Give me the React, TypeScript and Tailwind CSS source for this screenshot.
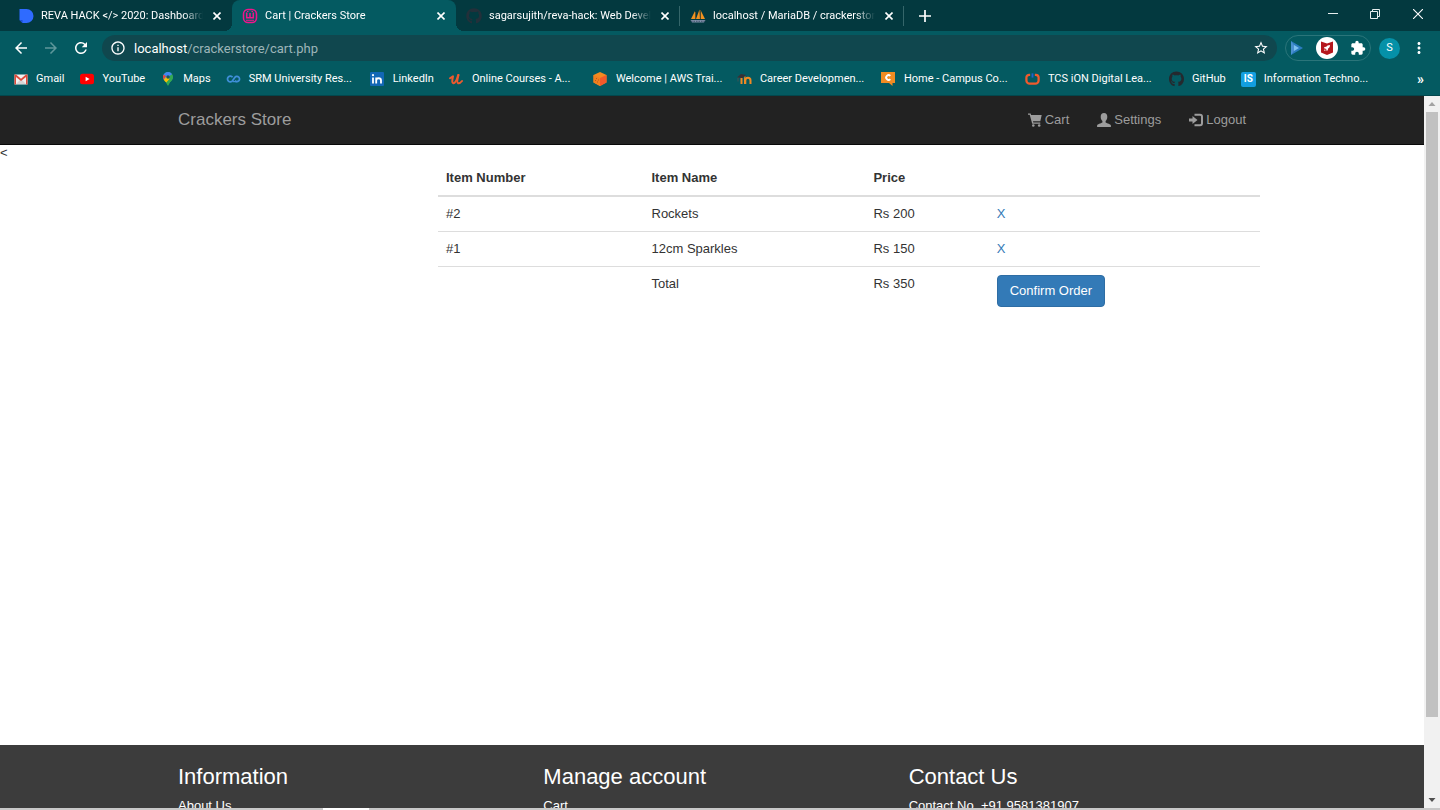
import type { ReactNode } from 'react';
import {
  MdArrowBack,
  MdArrowForward,
  MdRefresh,
  MdInfoOutline,
  MdStarBorder,
  MdExtension,
  MdMoreVert,
} from 'react-icons/md';
import { FaGithub } from 'react-icons/fa';

const DashIcon = () => (
  <svg viewBox="0 0 16 16" className="size-4">
    <path d="M1.500 1h7a7 7 0 0 1 0 14H4.500L1.500 12z" fill="#2f6bff" />
    <path d="M1.500 12h3v3z" fill="#1b4fd0" />
  </svg>
);

const WampIcon = () => (
  <svg viewBox="0 0 16 16" className="size-4" fill="none" stroke="#f0148c">
    <rect x="1.500" y="1.500" width="13" height="13" rx="4.500" strokeWidth="1.500" />
    <path d="M4.700 4.500v5.200h6.600V4.500M8 5v4.500" strokeWidth="1.500" />
    <path d="M4 12.300h8M5 3.500h1.500M9.500 3.500H11" strokeWidth="1" />
  </svg>
);

const PmaIcon = () => (
  <svg viewBox="0 0 16 16" className="size-4">
    <path d="M5 3 1 11h4zM9.500 1.500 6 11h4zM11 3v8h4z" fill="#f29220" />
    <path d="M5.500 4v7M10.400 2v9" stroke="#8a5a20" strokeWidth=".7" />
    <path d="M.5 12h15l-1.500 2.500H2z" fill="#7e8fa8" />
    <path d="M1 13.300h14" stroke="#33475e" strokeWidth=".8" strokeDasharray="1.500 1" />
  </svg>
);

const GmailIcon = () => (
  <svg viewBox="0 0 14 14" className="size-3.5">
    <path d="M.5 2.500h13v10H.5z" fill="#f1f1f1" />
    <path d="m2 12 5-5 5 5z" fill="#d8d4d4" />
    <path d="M.5 12.500v-10H2l5 4.200 5-4.200h1.500v10H12V5L7 9 2 5v7.500z" fill="#e04a3a" />
  </svg>
);

const YoutubeIcon = () => (
  <svg viewBox="0 0 14 14" className="size-3.5">
    <rect y="1.800" width="14" height="10.400" rx="2.500" fill="#f00" />
    <path d="m5.600 4.800 4 2.200-4 2.200z" fill="#fff" />
  </svg>
);

const MapsIcon = () => (
  <svg viewBox="0 0 14 14" className="size-3.5">
    <clipPath id="pin">
      <path d="M7 0a5 5 0 0 0-5 5c0 3.500 3.500 4.500 5 9 1.500-4.500 5-5.500 5-9a5 5 0 0 0-5-5z" />
    </clipPath>
    <g clipPath="url(#pin)">
      <path d="M0 0h14v14H0z" fill="#34a853" />
      <path d="M0 0h14L7 5 2 8z" fill="#4285f4" />
      <path d="M1 2l4 2-3.500 5L0 5z" fill="#ea4335" />
      <path d="M2 8.500 5.500 4.500 9 7 5 11z" fill="#fbbc04" />
      <path d="M12 3 5 11l2 3 6-7z" fill="#34a853" />
    </g>
    <circle cx="7" cy="5" r="1.700" fill="#1d5361" />
  </svg>
);

const SrmIcon = () => (
  <svg viewBox="0 0 16 14" className="h-3.5 w-4" fill="none" stroke="#3f8fd8" strokeWidth="1.900">
    <path d="M7 5.200A3 3 0 1 0 7 8.800L9.500 5.200a2.800 2.800 0 1 1 0 3.600" />
    <path d="M7 9.800h5" strokeWidth="1.300" />
  </svg>
);

const LinkedInIcon = () => (
  <svg viewBox="0 0 14 14" className="size-3.5">
    <rect width="14" height="14" rx="1" fill="#1267b5" />
    <path
      d="M3 5.500V11.500M6.200 5.500v6M6.200 8.500c0-3 4.800-3 4.800 0v3"
      fill="none"
      stroke="#fff"
      strokeWidth="1.800"
    />
    <circle cx="3" cy="3.200" r="1.100" fill="#fff" />
  </svg>
);

const UdemyIcon = () => (
  <svg viewBox="0 0 14 14" className="size-3.5" fill="none" stroke="#ee5a2e" strokeLinecap="round" strokeLinejoin="round">
    <path d="M1 6.300 4 4.200C3.500 7 2.500 11 4.200 11.300c2 .2 3.800-3.800 5-8.300" strokeWidth="2" />
    <path d="M9.500 3c-.8 3-2 7.800-.4 8.300 1.200.3 2.700-.8 3.900-2.300" strokeWidth="2" />
  </svg>
);

const AwsIcon = () => (
  <svg viewBox="0 0 14 14" className="size-3.5">
    <path d="m7 0 6.500 3v7.500L7 14 .5 10.500V3z" fill="#f28a20" />
    <path d="M13.500 3 7 6v8l6.500-3.500z" fill="#f2592a" />
    <path d="M.5 3 7 6v8L.5 10.500z" fill="#f07f1e" />
    <path d="M2 8.500h1M4 10h1M3 6.500h1M5 8h1" stroke="#a8501a" strokeWidth=".8" />
  </svg>
);

const MoodleIcon = () => (
  <svg viewBox="0 0 15 14" className="h-3.5 w-[15px]">
    <path
      d="M4.500 12V6M8 12V8c0-2.500 0-3 .3-3M8.300 12V8.500c0-3.600 5.200-3.600 5.200 0V12"
      fill="none"
      stroke="#f08a24"
      strokeWidth="2"
    />
    <path d="M0 5.500 4 2l5 1-3.500 3z" fill="#3a3033" />
    <path d="M1 5.500v4" stroke="#5d5052" strokeWidth=".7" />
  </svg>
);

const CampusIcon = () => (
  <svg viewBox="0 0 14 14" className="size-3.5">
    <path d="M0 0h14v11h-2.500v3L8 11H0z" fill="#f28c22" />
    <path d="M9.300 3.800a2.400 2.400 0 1 0 0 3.400" fill="none" stroke="#fff" strokeWidth="1.900" />
  </svg>
);

const TcsIcon = () => (
  <svg viewBox="0 0 16 14" className="h-3.5 w-4" fill="none">
    <path
      d="M5.500 2.500H4.500A3 3 0 0 0 1.500 5.500v3a3.500 3.500 0 0 0 3.500 3.500h6a3.500 3.500 0 0 0 3.500-3.500v-3a3 3 0 0 0-3-3H10.500"
      stroke="#f05a2c"
      strokeWidth="2.400"
    />
    <path d="M8 1v4.500" stroke="#1f63d0" strokeWidth="2" />
  </svg>
);

const IsIcon = () => (
  <span className="flex h-[15px] w-[15px] items-center justify-center rounded-xs bg-[#139fe0] text-[10px] font-bold leading-none text-white">
    IS
  </span>
);

type Tab = { title: string; icon: ReactNode; active?: boolean; divider?: boolean };

const tabs: Tab[] = [
  { title: 'REVA HACK </> 2020: Dashboard', icon: <DashIcon /> },
  { title: 'Cart | Crackers Store', icon: <WampIcon />, active: true },
  { title: 'sagarsujith/reva-hack: Web Development', icon: <FaGithub className="size-4 text-[#23303a]" />, divider: true },
  { title: 'localhost / MariaDB / crackerstore', icon: <PmaIcon />, divider: true },
];

const bookmarks: { label: string; icon: ReactNode; wide?: boolean }[] = [
  { label: 'Gmail', icon: <GmailIcon /> },
  { label: 'YouTube', icon: <YoutubeIcon /> },
  { label: 'Maps', icon: <MapsIcon /> },
  { label: 'SRM University Res...', icon: <SrmIcon />, wide: true },
  { label: 'LinkedIn', icon: <LinkedInIcon /> },
  { label: 'Online Courses - A...', icon: <UdemyIcon />, wide: true },
  { label: 'Welcome | AWS Trai...', icon: <AwsIcon />, wide: true },
  { label: 'Career Developmen...', icon: <MoodleIcon />, wide: true },
  { label: 'Home - Campus Co...', icon: <CampusIcon />, wide: true },
  { label: 'TCS iON Digital Lea...', icon: <TcsIcon />, wide: true },
  { label: 'GitHub', icon: <FaGithub className="size-4 text-[#24292e]" /> },
  { label: 'Information Techno...', icon: <IsIcon />, wide: true },
];

const items = [
  { id: 2, name: 'Rockets', price: 200 },
  { id: 1, name: '12cm Sparkles', price: 150 },
];

const footer = [
  { title: 'Information', links: ['About Us', 'Contact Us'] },
  { title: 'Manage account', links: ['Cart', 'Settings'] },
  { title: 'Contact Us', links: ['Contact No. +91 9581381907'] },
];

function TabStrip() {
  return (
    <div className="flex h-[31px] bg-[#03393f] pl-2">
      {tabs.map((tab) => (
        <div
          key={tab.title}
          className={`relative flex w-56 items-center pl-2.5 pr-2 ${tab.active ? 'rounded-t-lg bg-[#045a61]' : ''}`}
        >
          {tab.active && (
            <>
              <span className="absolute bottom-0 -left-2 size-2 bg-[radial-gradient(circle_at_top_left,transparent_8px,#045a61_8px)]" />
              <span className="absolute bottom-0 -right-2 size-2 bg-[radial-gradient(circle_at_top_right,transparent_8px,#045a61_8px)]" />
            </>
          )}
          <span className="w-[23px] shrink-0">{tab.icon}</span>
          <span className="min-w-0 flex-1 overflow-hidden whitespace-nowrap pt-0.5 text-[11px] [mask-image:linear-gradient(to_right,black_88%,transparent)]">
            {tab.title}
          </span>
          <button aria-label={`Close ${tab.title}`} className="flex w-7 shrink-0 justify-center">
            <svg viewBox="0 0 8 8" className="size-2" stroke="#fff" strokeWidth="1.600">
              <path d="M.5.5l7 7M7.500.5l-7 7" />
            </svg>
          </button>
          <span className={`-mr-2 h-5 w-px ${tab.divider ? 'bg-[#35666a]' : ''}`} />
        </div>
      ))}
      <button aria-label="New tab" className="flex w-[42px] items-center justify-center">
        <svg viewBox="0 0 12 12" className="size-3" stroke="#fff" strokeWidth="1.700">
          <path d="M6 0v12M0 6h12" />
        </svg>
      </button>
      <div className="ml-auto flex h-7 items-center">
        <button aria-label="Minimize" className="flex w-[42px] justify-center">
          <svg viewBox="0 0 10 10" className="size-2.5" stroke="#e6eeee">
            <path d="M0 4.500h10" />
          </svg>
        </button>
        <button aria-label="Restore" className="flex w-[42px] justify-center">
          <svg viewBox="0 0 10 10" className="size-2.5" fill="none" stroke="#e6eeee">
            <path d="M.5 2.500h7v7h-7zM2.500 2.500v-2h7v7h-2" />
          </svg>
        </button>
        <button aria-label="Close" className="flex w-11 justify-center">
          <svg viewBox="0 0 10 10" className="size-2.5" stroke="#fff" strokeWidth="1.100">
            <path d="M0 0l10 10M10 0L0 10" />
          </svg>
        </button>
      </div>
    </div>
  );
}

function Toolbar() {
  return (
    <div className="flex h-[34px] items-center pl-3 pr-4">
      <button aria-label="Back" className="mr-3"><MdArrowBack className="size-[18px]" /></button>
      <button aria-label="Forward" className="mr-3 text-[#5f979b]"><MdArrowForward className="size-[18px]" /></button>
      <button aria-label="Reload" className="mr-3"><MdRefresh className="size-[18px]" /></button>
      <div className="flex h-[26px] flex-1 items-center rounded-full bg-[#10474e] px-2">
        <MdInfoOutline className="size-4" />
        <a href="#url" className="ml-2 text-[13px] leading-none text-white">
          localhost<span className="text-[#9db5b8]">/crackerstore/cart.php</span>
        </a>
        <button aria-label="Bookmark this page" className="ml-auto"><MdStarBorder className="size-4" /></button>
      </div>
      <div className="ml-2 flex h-[26px] w-[86px] items-center justify-between rounded-full border border-[#2b757a] px-1">
        <svg viewBox="0 0 14 14" className="size-3.5">
          <path d="M1 0l12 7-12 7z" fill="#2b7cc0" />
          <path d="M1 0l5 7-5 7z" fill="#4a90d0" />
          <path d="M4 4l5 3-5 3z" fill="#7ec0f0" />
        </svg>
        <svg viewBox="0 0 22 22" className="size-[22px]">
          <circle cx="11" cy="11" r="11" fill="#fff" />
          <path d="M5 4.500l6 2 6-2v11l-6 2.500-6-2.500z" fill="#b5171d" />
          <path d="M14 8c-2 0-3 .7-3.700 1.800L8.500 10l-.7 1.200 1.400.2 1.200 1.200.2 1.500 1.200-.8.300-1.800C13.300 10.800 14 9.800 14 8zM8.800 12.200 8 14l1.800-.8z" fill="#fff" />
        </svg>
        <MdExtension className="size-4" />
      </div>
      <button className="ml-2 flex size-[21px] items-center justify-center rounded-full bg-[#0591a8] text-[11px]">S</button>
      <button aria-label="Menu" className="-mr-1 ml-2.5"><MdMoreVert className="size-[18px]" /></button>
    </div>
  );
}

function Bookmarks() {
  return (
    <div className="flex h-7 items-center pl-[13px] pr-4 text-[11px]">
      {bookmarks.map((b) => (
        <a
          key={b.label}
          href="#bookmark"
          className={`flex shrink-0 items-center whitespace-nowrap ${b.wide ? 'w-36' : 'pr-[15px]'}`}
        >
          <span className="mr-2 flex w-[15px] shrink-0 justify-center">{b.icon}</span>
          {b.label}
        </a>
      ))}
      <button aria-label="More bookmarks" className="ml-auto text-sm font-bold leading-none">»</button>
    </div>
  );
}

const CartIcon = () => (
  <svg viewBox="0 0 14 14" className="size-3.5" fill="currentColor">
    <path d="M0 .5h2.600l.5 1.500H13.700L12.300 8.300H5l.3 1.200H12.300v1.300H4.200L1.700 1.800H0z" />
    <circle cx="5.300" cy="12.500" r="1.300" />
    <circle cx="11.200" cy="12.500" r="1.300" />
  </svg>
);

const UserIcon = () => (
  <svg viewBox="0 0 14 14" className="size-3.5" fill="currentColor">
    <path d="M7 0C4.800 0 3.700 1.500 3.700 3.800c0 2 .7 3.400 1.700 4.300v1.300C3.800 10.300.3 11 .1 12.500V14h13.800v-1.500c-.2-1.500-3.700-2.200-5.300-3.100V8.100c1-.9 1.700-2.300 1.700-4.300C10.300 1.500 9.200 0 7 0z" />
  </svg>
);

const LogoutIcon = () => (
  <svg viewBox="0 0 14 14" className="size-3.5" fill="currentColor">
    <path d="M0 5.500h3.500V3L8.500 7l-5 4V8.500H0z" />
    <path d="M5.500.8H11a3 3 0 0 1 3 3v6.400a3 3 0 0 1-3 3H5.500v-2H11a1 1 0 0 0 1-1V3.800a1 1 0 0 0-1-1H5.500z" />
  </svg>
);

function Navbar() {
  return (
    <nav className="border-b border-[#080808] bg-[#222]">
      <div className="mx-auto flex h-12 max-w-[1096px] items-center justify-between px-3.5 text-[#9d9d9d]">
        <a href="#home" className="text-[17px]">Crackers Store</a>
        <div className="flex items-center gap-7 text-[13px]">
          <a href="#cart" className="flex items-center gap-[3px]"><CartIcon /> Cart</a>
          <a href="#settings" className="flex items-center gap-[3px]"><UserIcon /> Settings</a>
          <a href="#logout" className="flex items-center gap-[3px]"><LogoutIcon /> Logout</a>
        </div>
      </div>
    </nav>
  );
}

function CartTable() {
  const total = items.reduce((sum, item) => sum + item.price, 0);

  return (
    <div className="mx-auto max-w-[1096px]">
      <table className="ml-auto w-3/4 table-fixed border-collapse text-left [&_td]:px-2 [&_td]:py-2 [&_td]:align-top [&_th]:px-2 [&_th]:py-2">
        <thead>
          <tr className="border-b-2 border-[#ddd]">
            <th className="w-[25%]">Item Number</th>
            <th className="w-[27%]">Item Name</th>
            <th className="w-[15%]">Price</th>
            <th />
          </tr>
        </thead>
        <tbody>
          {items.map((item) => (
            <tr key={item.id} className="border-b border-[#ddd]">
              <td>#{item.id}</td>
              <td>{item.name}</td>
              <td>Rs {item.price}</td>
              <td><a href="#remove" className="text-[#337ab7]">X</a></td>
            </tr>
          ))}
          <tr>
            <td />
            <td>Total</td>
            <td>Rs {total}</td>
            <td>
              <button className="h-8 rounded border border-[#2e6da4] bg-[#337ab7] px-3 text-white">
                Confirm Order
              </button>
            </td>
          </tr>
        </tbody>
      </table>
    </div>
  );
}

function Footer() {
  return (
    <footer className="shrink-0 bg-[#3c3c3c] py-4 text-white">
      <div className="mx-auto grid max-w-[1096px] grid-cols-3">
        {footer.map((col) => (
          <div key={col.title} className="px-3.5">
            <h3 className="mb-1 text-[22px] leading-8">{col.title}</h3>
            {col.links.map((link) => (
              <a key={link} href="#footer" className="mb-2 block leading-[18px]">{link}</a>
            ))}
          </div>
        ))}
      </div>
    </footer>
  );
}

function Scrollbar() {
  return (
    <div className="flex w-4 shrink-0 flex-col items-center bg-[#f1f1f1]">
      <svg viewBox="0 0 16 16" className="size-4 shrink-0" fill="#a3a3a3">
        <path d="M4.500 10h7L8 6z" />
      </svg>
      <div className="w-full flex-1 px-0.5">
        <div className="h-[89%] bg-[#c1c1c1]" />
      </div>
      <svg viewBox="0 0 16 16" className="size-4 shrink-0" fill="#505050">
        <path d="M4.500 6h7L8 10z" />
      </svg>
    </div>
  );
}

export default function App() {
  return (
    <div className="flex h-screen flex-col overflow-hidden bg-white">
      <header className="shrink-0 border-b border-[#03474d] bg-[#045a61] pb-0.5 font-[Roboto,sans-serif] text-white">
        <TabStrip />
        <Toolbar />
        <Bookmarks />
      </header>

      <div className="flex min-h-0 flex-1">
        <div className="flex min-w-0 flex-1 flex-col overflow-hidden font-['Liberation_Sans',Arial,sans-serif] text-[13px] leading-[18px] text-[#333]">
          <Navbar />
          <main className="min-h-[600px] shrink-0">
            <p className="leading-4">&lt;</p>
            <CartTable />
          </main>
          <Footer />
        </div>
        <Scrollbar />
      </div>

      <div className="flex h-0.5 shrink-0 bg-[#c8c8c8]">
        <div className="ml-[323px] w-[46px] bg-white" />
      </div>
    </div>
  );
}
